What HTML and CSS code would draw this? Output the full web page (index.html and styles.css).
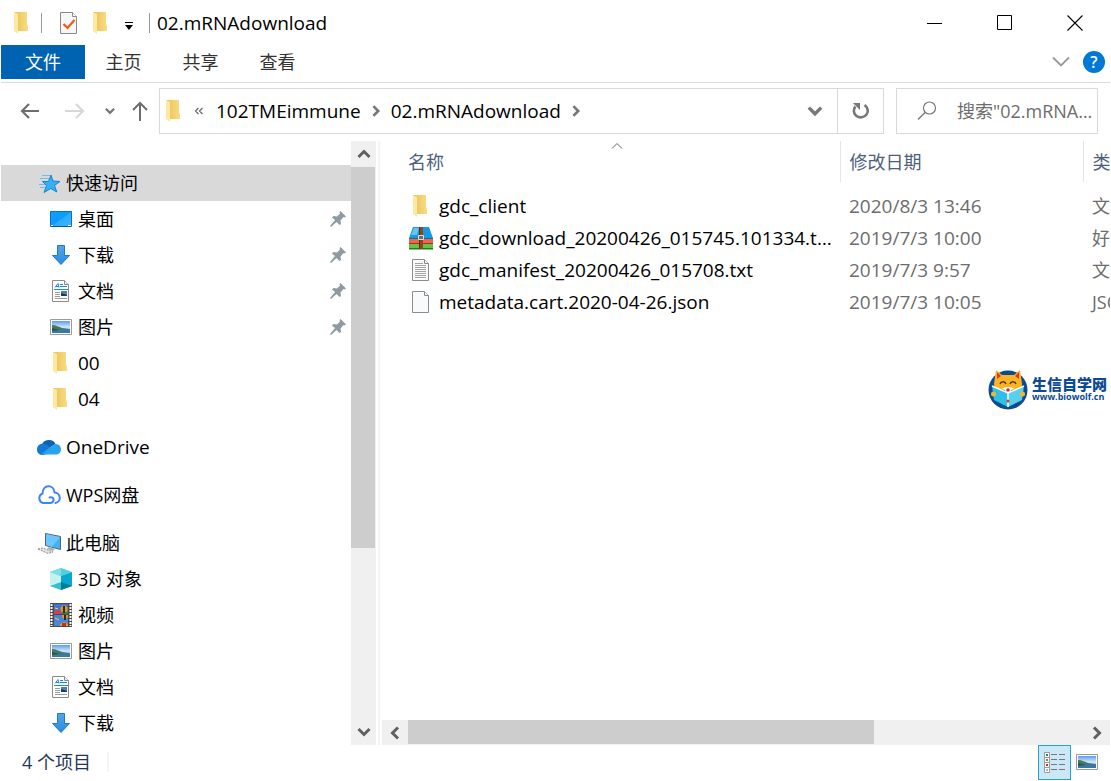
FILE: index.html
```html
<!DOCTYPE html>
<html lang="zh-CN">
<head>
    <meta charset="UTF-8">
    <meta name="viewport" content="width=device-width, initial-scale=1.0">
    <title>02.mRNAdownload</title>
    <link rel="stylesheet" href="styles.css">
</head>
<body>
    <!-- icon sprite -->
    <svg class="sprite" aria-hidden="true">
        <defs>
            <linearGradient id="gFolder" x1="0" x2="1"><stop offset="0" stop-color="#e8c158"/><stop offset="1" stop-color="#fbdc82"/></linearGradient>
            <linearGradient id="gSky" x1="0" y1="0" x2="0" y2="1"><stop offset="0" stop-color="#5b9bf0"/><stop offset=".5" stop-color="#cfe6fa"/><stop offset="1" stop-color="#8fc0e8"/></linearGradient>
            <linearGradient id="gDesk" x1="0" y1="0" x2="1" y2="1"><stop offset="0" stop-color="#12a0ff"/><stop offset=".5" stop-color="#0a9bff"/><stop offset=".52" stop-color="#2cabff"/><stop offset="1" stop-color="#3db4ff"/></linearGradient>
            <linearGradient id="gArrow" x1="0" y1="0" x2="0" y2="1"><stop offset="0" stop-color="#55a5ea"/><stop offset="1" stop-color="#268ce0"/></linearGradient>
        </defs>
        <symbol id="folder" viewBox="0 0 24 24">
            <path d="M4 1h13v12l1 2v5H4z" fill="url(#gFolder)"/>
            <path d="M4 1l4 2v20l-4-3z" fill="#ffe8a2"/>
        </symbol>
        <symbol id="checkdoc" viewBox="0 0 24 24">
            <path d="M3.500 1.500h12l4 4v17h-16z" fill="#f7f7f7" stroke="#8a8a8a"/>
            <path d="M15.500 1.500v4h4" fill="#fff" stroke="#8a8a8a"/>
            <path d="M6.500 13l4 4 7-8" fill="none" stroke="#f0590f" stroke-width="2.200"/>
        </symbol>
        <symbol id="star" viewBox="0 0 24 24">
            <path d="M14 4l1.900 6 7 .5-5.400 4 2.300 6.500-6-3.500-6.800 4 2.500-7-4-4h6z" fill="#35b0f6" stroke="#1583cc"/>
            <path d="M5 4.500h8M3 7.500h9M2 13.500h6M3 16.500h5" stroke="#6fbdec" stroke-width="1"/>
        </symbol>
        <symbol id="desktop" viewBox="0 0 24 24">
            <path d="M1.500 4.500h21v15h-21z" fill="url(#gDesk)" stroke="#0b72b8"/>
            <path d="M2 19.500h20" stroke="#075a95"/><path d="M2 18.500h2M19 18.500h3" stroke="#fff"/>
        </symbol>
        <symbol id="download" viewBox="0 0 24 24">
            <path d="M8.500 2.500h7v10h5L12 21.500l-8.500-9h5z" fill="url(#gArrow)" stroke="#2178c4"/>
        </symbol>
        <symbol id="document" viewBox="0 0 24 24">
            <path d="M3.500 1.500h12l4 4v17h-16z" fill="#fff" stroke="#8c8c8c"/>
            <path d="M15.500 1.500v4h4" fill="#eee" stroke="#8c8c8c"/>
            <path d="M6 8.500l3-4 1 4M7 7.500h3M11 5.500h3M11 7.500h7M5 10.500h14" fill="none" stroke="#1b8ad6"/>
            <path d="M6 13.500h5M6 15.500h5M6 17.500h5M6 19.500h12" stroke="#9a9a9a"/>
            <path d="M12 12h6v5h-6z" fill="#4b80b0"/><path d="M12 17v-3l6 2v1z" fill="#173f55"/>
        </symbol>
        <symbol id="picture" viewBox="0 0 24 24">
            <path d="M1.500 4.500h21v15h-21z" fill="#fff" stroke="#9a9a9a"/>
            <path d="M3 6h18v12H3z" fill="url(#gSky)"/>
            <path d="M3 10c4 0 7 2 10 3l8 1v1H3z" fill="#47785d"/>
            <path d="M3 14l10 .5 8-.5v4H3z" fill="#3979a6"/>
            <path d="M3 13l8 2-8 1z" fill="#26584c"/>
        </symbol>
        <symbol id="onedrive" viewBox="0 0 24 24">
            <path d="M5 10a7 6 0 0 1 13.500-1l-8 5z" fill="#0c61b5"/>
            <path d="M0 15c-.5-5 5-8 10-5l7 5-10 5H5c-3 0-5-3-5-5z" fill="#1379d4"/>
            <path d="M12 13l6.500-4c4 0 5.500 3 5.500 5.500s-2 5-5 5H4z" fill="#27a4ea"/>
        </symbol>
        <symbol id="wps" viewBox="0 0 24 24">
            <path d="M13.500 20H6a5 5 0 0 1-.4-9.500C5.500 1 17 1 17.500 9.500A5.300 5.300 0 0 1 18.500 20M13.500 20c4.500-.5 4-7-1-5.500" fill="none" stroke="#3c85f6" stroke-width="2" stroke-linecap="round" stroke-linejoin="round"/>
        </symbol>
        <symbol id="computer" viewBox="0 0 24 24">
            <path d="M8.500 2.500l15 3v13l-15-4z" fill="#41b2fa" stroke="#59626a"/>
            <path d="M9 3l14 3-8 10-6-2z" fill="#6cc7ff"/>
            <path d="M12 16l6 2-2 2-6-2z" fill="#a7adb2"/>
            <path d="M1 18l5-1 10 4-5 1.500z" fill="#dfe3e6" stroke="#8a9197" stroke-dasharray="2 1"/>
        </symbol>
        <symbol id="cube" viewBox="0 0 24 24">
            <path d="M12 1l11 4v14l-11 4-11-4V5z" fill="#c5f1f1"/>
            <path d="M1 5l11-4 11 4-11 4z" fill="#4fcfdf"/><path d="M12 1v8L1 5z" fill="#7ce0e2"/>
            <path d="M12 9l11-4v14l-11 4z" fill="#08a6d2"/>
            <path d="M1 19l11-4v8z" fill="#35c0ce"/><path d="M12 15l11 4-11 4z" fill="#087c96"/>
        </symbol>
        <symbol id="video" viewBox="0 0 24 24">
            <path d="M1 0h22v24H1z" fill="#4a4a4a"/>
            <path d="M2.500 1v22M21.500 1v22" stroke="#fff" stroke-width="2" stroke-dasharray="2 1"/>
            <path d="M5 1h14v10H5z" fill="#4276cb"/><path d="M5 12h14v11H5z" fill="#4a83d8"/>
            <path d="M5 8l5-1 3 4H5z" fill="#e33b45"/><path d="M13 9h6v2h-6z" fill="#23893c"/>
            <circle cx="15" cy="6" r="3.500" fill="#eb9417"/><path d="M14 3h2v7h-2z" fill="#342b20"/>
            <path d="M6 5l3 1" stroke="#f6e04b"/>
            <path d="M13 12h6c0 3-2 4-3 4s-3-1-3-4z" fill="#ec9a1b"/><path d="M15 12h2v5h-2z" fill="#302820"/>
            <path d="M6 15l4 2" stroke="#e8d43c"/><path d="M11 23c0-5 8-5 8 0z" fill="#f2a01f"/><path d="M13 20h4v3h-4z" fill="#c03022"/>
        </symbol>
        <symbol id="archive" viewBox="0 0 24 24">
            <path d="M4 1h16l4 11H0z" fill="#189ade"/><path d="M5 2h5L8 9H2z" fill="#66c6f0"/>
            <path d="M0 12h24v1H0z" fill="#0870ad"/><path d="M0 13h24v5H0z" fill="#ef6547"/>
            <path d="M0 17h24v1H0z" fill="#a82e20"/><path d="M0 18h24v5H0z" fill="#68c344"/><path d="M0 22h24v1.500H0z" fill="#217c1d"/>
            <path d="M10 1h4v22h-4z" fill="#8a4728"/><path d="M10 1h1v22h-1z" fill="#5c2d18"/>
            <path d="M9.500 9.500h5v4h-5z" fill="#79685c" stroke="#ddd"/>
        </symbol>
        <symbol id="textfile" viewBox="0 0 24 24">
            <path d="M3.500 1.500h12l4 4v17h-16z" fill="#fafafa" stroke="#8c8c8c"/>
            <path d="M15.500 1.500v4h4" fill="#eee" stroke="#8c8c8c"/>
            <path d="M6 5.500h8M6 7.500h11M6 9.500h11M6 11.500h11M6 13.500h11M6 15.500h11M6 17.500h11M6 19.500h11" stroke="#a3a3a3"/>
        </symbol>
        <symbol id="blankfile" viewBox="0 0 24 24">
            <path d="M3.500 1.500h12l4 4v17h-16z" fill="#f9fafb" stroke="#8c8c8c"/>
            <path d="M15.500 1.500v4h4" fill="#eee" stroke="#8c8c8c"/>
        </symbol>
        <symbol id="pin" viewBox="0 0 18 18">
            <path d="M11.500 1l5.500 5.500-1.500 1-1-.5-3 3.500.5 3.500-1.500 1-3-3L2 17l-1-1 5-6-3-2.500 1.500-1.500 3.500.5L11 3.500 10.500 2z" fill="#8e9ba3"/>
        </symbol>
        <symbol id="chev" viewBox="0 0 16 16">
            <path d="M2.500 5l5.500 5.500L13.500 5" fill="none" stroke="currentColor" stroke-width="3"/>
        </symbol>
        <symbol id="chevthin" viewBox="0 0 18 18">
            <path d="M1 4.500l8 8 8-8" fill="none" stroke="currentColor" stroke-width="1.800"/>
        </symbol>
    </svg>

    <div class="window">
        <header class="titlebar">
            <svg class="icon"><use href="#folder"/></svg>
            <span class="divider"></span>
            <button class="quick" aria-label="属性"><svg class="icon"><use href="#checkdoc"/></svg></button>
            <button class="quick" aria-label="新建文件夹"><svg class="icon"><use href="#folder"/></svg></button>
            <button class="quick-more" aria-label="自定义快速访问工具栏">
                <svg width="10" height="10" viewBox="0 0 10 10"><path d="M1 1.500h8" stroke="#000"/><path d="M1 4h8L5 9z"/></svg>
            </button>
            <span class="divider"></span>
            <h1 class="title">02.mRNAdownload</h1>
            <button class="win-btn" aria-label="最小化"><svg width="16" height="16"><path d="M0 8.500h15" stroke="#000"/></svg></button>
            <button class="win-btn" aria-label="最大化"><svg width="16" height="16"><path d="M.5 .5h14v14H.5z" fill="none" stroke="#000"/></svg></button>
            <button class="win-btn" aria-label="关闭"><svg width="16" height="16"><path d="M.5 .5l15 15M15.500 .5l-15 15" stroke="#000" stroke-width="1.100"/></svg></button>
        </header>

        <div class="ribbon">
            <button class="tab tab-file">文件</button>
            <button class="tab">主页</button>
            <button class="tab">共享</button>
            <button class="tab">查看</button>
            <button class="ribbon-toggle" aria-label="展开功能区"><svg width="18" height="18"><use href="#chevthin"/></svg></button>
            <button class="help" aria-label="帮助">?</button>
        </div>

        <div class="navbar">
            <button class="nav-btn" aria-label="后退"><svg width="20" height="20" viewBox="0 0 20 20"><path d="M19 10H2M9 3l-7 7 7 7" fill="none" stroke="#6e6e6e" stroke-width="2.200"/></svg></button>
            <button class="nav-btn" aria-label="前进" disabled><svg width="20" height="20" viewBox="0 0 20 20"><path d="M0 10h18M11 3l7 7-7 7" fill="none" stroke="#d8d8d8" stroke-width="2.200"/></svg></button>
            <button class="nav-btn nav-recent" aria-label="最近浏览的位置"><svg width="12" height="12"><use href="#chev"/></svg></button>
            <button class="nav-btn nav-up" aria-label="上移"><svg width="18" height="20" viewBox="0 0 18 20"><path d="M9 20V2M2 9l7-7 7 7" fill="none" stroke="#6e6e6e" stroke-width="2"/></svg></button>

            <div class="address">
                <svg class="icon"><use href="#folder"/></svg>
                <svg class="overflow" width="10" height="8"><path d="M4.500 1l-3 3 3 3M8.500 1l-3 3 3 3" fill="none" stroke="#666" stroke-width="1.200"/></svg>
                <a class="crumb" href="#">102TMEimmune</a>
                <svg class="crumb-sep" width="14" height="14"><use href="#chev"/></svg>
                <a class="crumb" href="#">02.mRNAdownload</a>
                <svg class="crumb-sep" width="14" height="14"><use href="#chev"/></svg>
                <button class="address-drop" aria-label="上一个位置"><svg width="18" height="18"><use href="#chev"/></svg></button>
                <button class="refresh" aria-label="刷新">
                    <svg width="18" height="18" viewBox="0 0 18 18"><path d="M12.500 3.200a7 6.600 0 1 1-9 1.300" fill="none" stroke="#777" stroke-width="2.600"/><path d="M1 1h7v7l-2.500-2.500z" fill="#777"/></svg>
                </button>
            </div>

            <label class="search">
                <svg width="20" height="20" viewBox="0 0 20 20"><circle cx="12.500" cy="7" r="6" fill="none" stroke="#777" stroke-width="1.200"/><path d="M8.300 11.300L1 18.500" stroke="#777" stroke-width="1.400"/></svg>
                <input type="text" aria-label="搜索" placeholder="搜索&quot;02.mRNAdownload&quot;">
            </label>
        </div>

        <main class="main">
            <nav class="sidebar">
                <ul class="tree">
                    <li><a class="node selected" href="#"><svg class="icon"><use href="#star"/></svg>快速访问</a></li>
                    <li><a class="node child" href="#"><svg class="icon"><use href="#desktop"/></svg>桌面<svg class="pin"><use href="#pin"/></svg></a></li>
                    <li><a class="node child" href="#"><svg class="icon"><use href="#download"/></svg>下载<svg class="pin"><use href="#pin"/></svg></a></li>
                    <li><a class="node child" href="#"><svg class="icon"><use href="#document"/></svg>文档<svg class="pin"><use href="#pin"/></svg></a></li>
                    <li><a class="node child" href="#"><svg class="icon"><use href="#picture"/></svg>图片<svg class="pin"><use href="#pin"/></svg></a></li>
                    <li><a class="node child latin" href="#"><svg class="icon"><use href="#folder"/></svg>00</a></li>
                    <li><a class="node child latin" href="#"><svg class="icon"><use href="#folder"/></svg>04</a></li>
                </ul>
                <ul class="tree">
                    <li><a class="node latin" href="#"><svg class="icon"><use href="#onedrive"/></svg>OneDrive</a></li>
                </ul>
                <ul class="tree">
                    <li><a class="node" href="#"><svg class="icon"><use href="#wps"/></svg>WPS网盘</a></li>
                </ul>
                <ul class="tree">
                    <li><a class="node" href="#"><svg class="icon"><use href="#computer"/></svg>此电脑</a></li>
                    <li><a class="node child" href="#"><svg class="icon"><use href="#cube"/></svg>3D 对象</a></li>
                    <li><a class="node child" href="#"><svg class="icon"><use href="#video"/></svg>视频</a></li>
                    <li><a class="node child" href="#"><svg class="icon"><use href="#picture"/></svg>图片</a></li>
                    <li><a class="node child" href="#"><svg class="icon"><use href="#document"/></svg>文档</a></li>
                    <li><a class="node child" href="#"><svg class="icon"><use href="#download"/></svg>下载</a></li>
                </ul>
            </nav>
            <div class="vscroll">
                <button class="scroll-btn" aria-label="向上滚动"><svg class="flip" width="16" height="16"><use href="#chev"/></svg></button>
                <div class="track"><div class="thumb"></div></div>
                <button class="scroll-btn" aria-label="向下滚动"><svg width="16" height="16"><use href="#chev"/></svg></button>
            </div>

            <section class="files">
                <div class="list">
                    <table class="table">
                        <colgroup><col class="col-name"><col class="col-date"><col></colgroup>
                        <thead>
                            <tr>
                                <th>名称<svg class="sort" width="12" height="12" viewBox="0 0 12 12"><path d="M1 7.500l5-5 5 5" fill="none" stroke="#666"/></svg></th>
                                <th>修改日期</th>
                                <th>类型</th>
                            </tr>
                        </thead>
                        <tbody>
                            <tr>
                                <td><div class="file"><svg class="icon"><use href="#folder"/></svg><span>gdc_client</span></div></td>
                                <td class="date">2020/8/3 13:46</td>
                                <td>文件夹</td>
                            </tr>
                            <tr>
                                <td><div class="file"><svg class="icon"><use href="#archive"/></svg><span>gdc_download_20200426_015745.101334.tar.gz</span></div></td>
                                <td class="date">2019/7/3 10:00</td>
                                <td>好压 GZ 压缩文件</td>
                            </tr>
                            <tr>
                                <td><div class="file"><svg class="icon"><use href="#textfile"/></svg><span>gdc_manifest_20200426_015708.txt</span></div></td>
                                <td class="date">2019/7/3 9:57</td>
                                <td>文本文档</td>
                            </tr>
                            <tr>
                                <td><div class="file"><svg class="icon"><use href="#blankfile"/></svg><span>metadata.cart.2020-04-26.json</span></div></td>
                                <td class="date">2019/7/3 10:05</td>
                                <td>JSON 文件</td>
                            </tr>
                        </tbody>
                    </table>
                </div>
                <div class="hscroll">
                    <button class="scroll-btn" aria-label="向左滚动"><svg class="turn-left" width="16" height="16"><use href="#chev"/></svg></button>
                    <div class="track"><div class="thumb"></div></div>
                    <button class="scroll-btn" aria-label="向右滚动"><svg class="turn-right" width="16" height="16"><use href="#chev"/></svg></button>
                </div>

                <div class="brand">
                    <svg width="40" height="42" viewBox="0 0 40 42">
                        <circle cx="20" cy="21" r="19.500" fill="#0d4a96"/>
                        <path d="M8 1l6 5h12l6-5 2 14-1 6H7L6 15z" fill="#fbb520"/>
                        <path d="M9 3l4 4-4 3zM31 3l-4 4 4 3z" fill="#e5352b"/>
                        <path d="M12 15c1-3 5-3 6 0M22 15c1-3 5-3 6 0" fill="none" stroke="#54351b" stroke-width="1.500"/>
                        <path d="M14 19l6-1 6 1-6 5z" fill="#fff"/><circle cx="20" cy="21" r="1.800" fill="#d92b25"/>
                        <path d="M4 17l16 7v14L6 31z" fill="#2ec0e6"/><path d="M36 17l-16 7v14l14-7z" fill="#57d0ee"/>
                        <path d="M4 17l16 7 16-7M20 24v14" fill="none" stroke="#fff" stroke-width="1.500"/>
                        <circle cx="5.500" cy="25" r="2.500" fill="#fbb520"/><circle cx="34.500" cy="25" r="2.500" fill="#fbb520"/><circle cx="20" cy="32" r="1.500" fill="#e5352b"/>
                    </svg>
                    <div class="brand-text">
                        <strong>生信自学网</strong>
                        <span>www.biowolf.cn</span>
                    </div>
                </div>
            </section>
        </main>

        <footer class="status">
            <span class="count">4 个项目</span>
            <button class="view active" aria-label="详细信息">
                <svg width="22" height="22" viewBox="0 0 22 22">
                    <path d="M.5 .5h5v5h-5zM.5 5.500h5v5h-5zM.5 10.500h5v5h-5zM.5 15.500h5v5h-5z" fill="#fff" stroke="#9a9a9a"/>
                    <path d="M2 2h2v2H2z" fill="#2b7d9b"/><path d="M2 7h2v2H2z" fill="#8a8a2b"/><path d="M2 12h2v2H2z" fill="#c03a1b"/><path d="M2 17h2v2H2z" fill="#9cb4cc"/>
                    <path d="M7 2.500h6M15 2.500h6M7 7.500h6M15 7.500h6M7 12.500h6M15 12.500h6M7 17.500h6M15 17.500h6" stroke="#777"/>
                </svg>
            </button>
            <button class="view" aria-label="大图标"><svg class="icon"><use href="#picture"/></svg></button>
        </footer>
    </div>
</body>
</html>
```

FILE: styles.css
```css
* {
    box-sizing: border-box;
}
body {
    margin: 0;
    background: #fff;
    color: #000;
    font-family: 'Open Sans', 'Noto Sans CJK SC', sans-serif;
    font-size: 18px;
    line-height: 24px;
}
button {
    border: none;
    padding: 0;
    background: none;
    font: inherit;
    color: inherit;
    display: flex;
    align-items: center;
    justify-content: center;
}
a {
    color: inherit;
    text-decoration: none;
}
svg {
    display: block;
    flex: none;
}
.sprite {
    position: absolute;
    width: 0;
    height: 0;
}
.icon {
    width: 24px;
    height: 24px;
}
.latin {
    font-size: 19px;
}
.window {
    display: flex;
    flex-direction: column;
    height: 100vh;
    padding: 0 1px;
}

/* title bar */
.titlebar {
    display: flex;
    align-items: center;
    height: 45px;
    padding-left: 9px;
}
.divider {
    width: 1px;
    height: 20px;
    margin: 0 7px;
    background: #999;
}
.quick {
    width: 32px;
    height: 32px;
    margin-left: 4px;
}
.quick + .quick {
    margin-left: 0;
}
.quick-more {
    width: 24px;
    height: 32px;
    padding-top: 6px;
}
.quick-more + .divider {
    margin-left: 8px;
}
.title {
    flex: 1;
    margin: 0;
    font-size: 19px;
    font-weight: 400;
}
.win-btn {
    width: 70px;
    height: 45px;
}

/* ribbon */
.ribbon {
    display: flex;
    align-items: center;
    height: 38px;
    padding-bottom: 3px;
    border-bottom: 1px solid #dadbdc;
}
.tab {
    width: 77px;
    height: 34px;
    color: #333;
}
.tab-file {
    width: 84px;
    background: #0063b1;
    color: #fff;
}
.ribbon-toggle {
    width: 32px;
    margin-left: auto;
    color: #999;
}
.help {
    width: 22px;
    height: 22px;
    margin: 0 5px 0 6px;
    border-radius: 50%;
    background: #0078d7;
    color: #fff;
    font-size: 16px;
    font-weight: 600;
}

/* navigation row */
.navbar {
    display: flex;
    align-items: center;
    padding: 5px 12px 7px 6px;
}
.nav-btn {
    width: 45px;
    height: 46px;
    color: #777;
}
.nav-recent {
    width: 26px;
}
.nav-up {
    width: 34px;
    margin-right: 2px;
}
.address {
    display: flex;
    align-items: center;
    flex: 1;
    height: 46px;
    margin-right: 12px;
    padding-left: 2px;
    border: 1px solid #d9d9d9;
    color: #777;
}
.overflow {
    margin: 0 12px 0 8px;
}
.crumb {
    color: #000;
    font-size: 19px;
}
.crumb-sep {
    margin: 0 8px;
    transform: rotate(-90deg);
}
.address-drop {
    width: 44px;
    height: 44px;
    margin-left: auto;
}
.refresh {
    width: 46px;
    height: 44px;
    border-left: 1px solid #d9d9d9;
}
.search {
    display: flex;
    align-items: center;
    width: 202px;
    height: 46px;
    padding-left: 20px;
    border: 1px solid #d9d9d9;
}
.search input {
    flex: 1;
    min-width: 0;
    margin-left: 20px;
    padding: 0;
    border: none;
    outline: none;
    background: none;
    font: inherit;
    text-overflow: ellipsis;
}
.search input::placeholder {
    color: #6d6d6d;
}

/* main area */
.main {
    display: flex;
    flex: 1;
    min-height: 0;
}
.sidebar {
    width: 350px;
    padding-top: 24px;
    overflow: hidden;
}
.tree {
    margin: 0 0 12px;
    padding: 0;
    list-style: none;
}
.node {
    display: flex;
    align-items: center;
    gap: 5px;
    height: 36px;
    padding: 0 4px 0 36px;
}
.node.child {
    padding-left: 48px;
}
.node.selected {
    background: #d9d9d9;
}
.pin {
    width: 18px;
    height: 18px;
    margin-left: auto;
}
.vscroll {
    display: flex;
    flex-direction: column;
    width: 25px;
    background: #f0f0f0;
}
.scroll-btn {
    width: 26px;
    height: 26px;
    color: #606060;
}
.vscroll .scroll-btn {
    width: 25px;
}
.hscroll .scroll-btn {
    height: 25px;
}
.track {
    flex: 1;
}
.vscroll .thumb {
    width: 24px;
    height: 69%;
    background: #cdcdcd;
}
.hscroll .thumb {
    width: 69%;
    height: 24px;
    background: #cdcdcd;
}
.flip {
    transform: rotate(180deg);
}
.turn-left {
    transform: rotate(90deg);
}
.turn-right {
    transform: rotate(-90deg);
}
.files {
    position: relative;
    display: flex;
    flex-direction: column;
    flex: 1;
    min-width: 0;
    margin-left: 2px;
    padding-left: 2px;
    border-left: 2px solid #f5f5f5;
}
.list {
    flex: 1;
    overflow: hidden;
}
.hscroll {
    display: flex;
    height: 25px;
    background: #f0f0f0;
}

/* file table */
.table {
    width: 1056px;
    table-layout: fixed;
    border-collapse: collapse;
}
.col-name {
    width: 458px;
}
.col-date {
    width: 243px;
}
.table th {
    position: relative;
    height: 41px;
    padding: 0 9px;
    border-right: 1px solid #e5e5e5;
    color: #4c607a;
    font-weight: 400;
    text-align: left;
}
.table th:first-child {
    padding-left: 26px;
}
.sort {
    position: absolute;
    top: 0;
    left: 50%;
}
.table td {
    height: 32px;
    padding: 0 9px;
    color: #6d6d6d;
    white-space: nowrap;
}
.table td:first-child {
    padding: 0 6px 0 27px;
    color: #000;
}
.table tbody::before {
    content: '';
    display: block;
    height: 8px;
}
.table .date {
    font-size: 19px;
}
.file {
    display: flex;
    align-items: center;
    gap: 6px;
    font-size: 19px;
}
.file span {
    overflow: hidden;
    text-overflow: ellipsis;
}

/* site badge over the list */
.brand {
    position: absolute;
    top: 228px;
    right: 3px;
    display: flex;
    align-items: center;
    gap: 4px;
    color: #0d4a96;
}
.brand-text {
    display: flex;
    flex-direction: column;
    font-size: 15px;
    line-height: 14px;
}
.brand-text strong {
    font-weight: 900;
}
.brand-text span {
    font-size: 9px;
    font-weight: 700;
    line-height: 12px;
}

/* status bar */
.status {
    display: flex;
    align-items: flex-start;
    height: 36px;
    padding-left: 21px;
}
.count {
    margin: 7px auto 0 0;
    padding-right: 16px;
    border-right: 2px solid #f5f5f5;
    color: #1e395b;
    line-height: 20px;
}
.view {
    width: 31px;
    height: 34px;
    margin-right: 8px;
}
.view.active {
    width: 33px;
    height: 35px;
    margin-right: 0;
    border: 1px solid #26a0da;
    background: #cbe8f6;
}
```
